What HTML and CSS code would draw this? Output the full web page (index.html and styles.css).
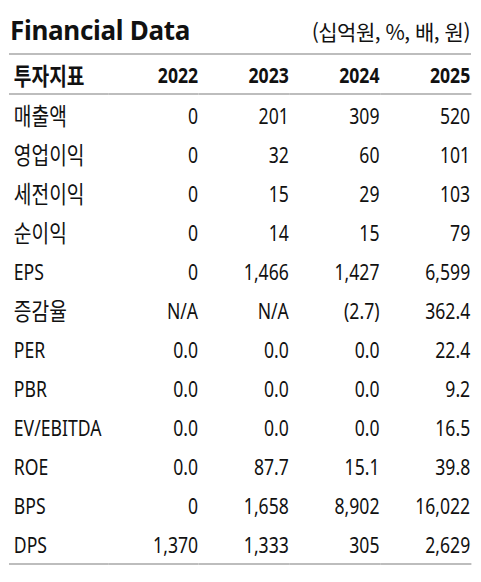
FILE: index.html
```html
<!DOCTYPE html>
<html lang="ko">
<head>
    <meta charset="UTF-8">
    <meta name="viewport" content="width=device-width, initial-scale=1.0">
    <title>Financial Data</title>
    <link rel="stylesheet" href="styles.css">
</head>
<body>
    <div class="panel">
        <div class="title-bar">
            <h1>Financial Data</h1>
            <span class="unit">(십억원, %, 배, 원)</span>
        </div>
        <table class="fin-table">
            <thead>
                <tr>
                    <th class="ko">투자지표</th>
                    <th>2022</th>
                    <th>2023</th>
                    <th>2024</th>
                    <th>2025</th>
                </tr>
            </thead>
            <tbody>
                <tr><td class="ko">매출액</td><td>0</td><td>201</td><td>309</td><td>520</td></tr>
                <tr><td class="ko">영업이익</td><td>0</td><td>32</td><td>60</td><td>101</td></tr>
                <tr><td class="ko">세전이익</td><td>0</td><td>15</td><td>29</td><td>103</td></tr>
                <tr><td class="ko">순이익</td><td>0</td><td>14</td><td>15</td><td>79</td></tr>
                <tr><td>EPS</td><td>0</td><td>1,466</td><td>1,427</td><td>6,599</td></tr>
                <tr><td class="ko">증감율</td><td>N/A</td><td>N/A</td><td>(2.7)</td><td>362.4</td></tr>
                <tr><td>PER</td><td>0.0</td><td>0.0</td><td>0.0</td><td>22.4</td></tr>
                <tr><td>PBR</td><td>0.0</td><td>0.0</td><td>0.0</td><td>9.2</td></tr>
                <tr><td>EV/EBITDA</td><td>0.0</td><td>0.0</td><td>0.0</td><td>16.5</td></tr>
                <tr><td>ROE</td><td>0.0</td><td>87.7</td><td>15.1</td><td>39.8</td></tr>
                <tr><td>BPS</td><td>0</td><td>1,658</td><td>8,902</td><td>16,022</td></tr>
                <tr><td>DPS</td><td>1,370</td><td>1,333</td><td>305</td><td>2,629</td></tr>
            </tbody>
        </table>
    </div>
</body>
</html>
```

FILE: styles.css
```css
body { margin: 0; background: #fff; color: #111; font-family: "Noto Sans", "Noto Sans CJK KR", sans-serif; }
.panel { width: 462px; margin: 0 0 0 9px; padding-top: 11px; }
.title-bar { display: flex; justify-content: space-between; align-items: baseline; padding: 0 1px; height: 42px; border-bottom: 2px solid #bdbdbd; }
.title-bar h1 { margin: 0; font-size: 26px; font-weight: bold; letter-spacing: -0.3px; line-height: 38px; }
.unit { font-size: 21px; letter-spacing: -0.5px; font-family: "Noto Sans CJK KR", sans-serif; }
/* condensed table: laid out wide, squeezed to 462px */
.fin-table { width: 577.5px; border-collapse: collapse; table-layout: fixed; border-bottom: 2px solid #bdbdbd; transform: scaleX(0.8); transform-origin: 0 0; }
.fin-table th, .fin-table td { padding: 0 1px 0 0; text-align: right; white-space: nowrap; font-size: 22px; }
.fin-table th { height: 38px; font-weight: bold; border-bottom: 2px solid #bdbdbd; }
.fin-table td { height: 39px; font-weight: normal; }
.fin-table th:first-child, .fin-table td:first-child { width: 117px; text-align: left; padding-left: 6px; }
.fin-table .ko { font-family: "Noto Sans CJK KR", sans-serif; font-size: 24px; letter-spacing: 0; }
```
